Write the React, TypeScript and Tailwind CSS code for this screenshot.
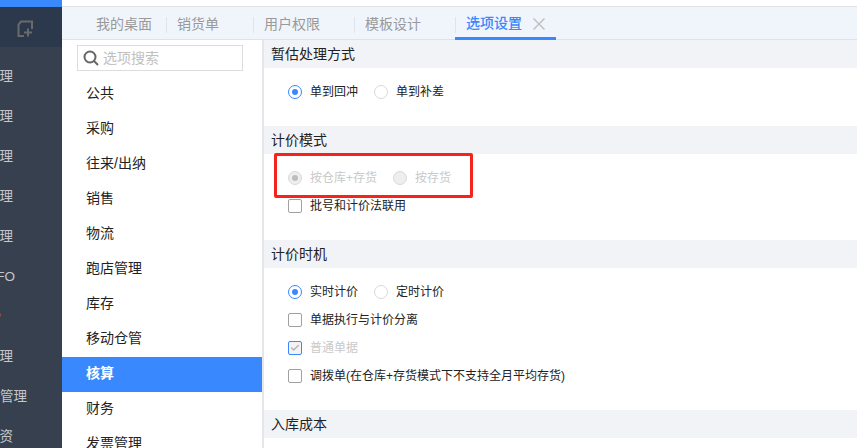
import { X, Check } from "lucide-react";

const font = { fontFamily: '"Liberation Sans", "Noto Sans CJK SC", sans-serif' };

const sideItems = [
  { label: "管理", cls: "mr-[49px]" },
  { label: "管理", cls: "mr-[49px]" },
  { label: "管理", cls: "mr-[49px]" },
  { label: "管理", cls: "mr-[49px]" },
  { label: "管理", cls: "mr-[49px]" },
  { label: "FIFO", cls: "mr-[47px]" },
  { label: "P", cls: "mr-[61px] text-[#c8623a]" },
  { label: "管理", cls: "mr-[49px]" },
  { label: "库存管理", cls: "mr-[35px]" },
  { label: "工资", cls: "mr-[49px]" },
];

const menu = ["公共", "采购", "往来/出纳", "销售", "物流", "跑店管理", "库存", "移动仓管", "核算", "财务", "发票管理"];
const tabs = ["我的桌面", "销货单", "用户权限", "模板设计"];

function Radio({ label, checked, disabled }: { label: string; checked?: boolean; disabled?: boolean }) {
  if (disabled) {
    return (
      <label className="flex items-center gap-[8px] text-[#c9c9c9]">
        <span className="flex h-[14px] w-[14px] items-center justify-center rounded-full border border-[#d9d9d9] bg-[#eeeeee]">
          {checked && <span className="h-[6px] w-[6px] rounded-full bg-[#bdbdbd]" />}
        </span>
        {label}
      </label>
    );
  }
  return (
    <label className="flex items-center gap-[8px] text-[#222]">
      <span className={`flex h-[14px] w-[14px] items-center justify-center rounded-full border bg-white ${checked ? "border-[#3a88fd]" : "border-[#d9d9d9]"}`}>
        {checked && <span className="h-[6px] w-[6px] rounded-full bg-[#3a88fd]" />}
      </span>
      {label}
    </label>
  );
}

function CheckRow({ label, checked }: { label: string; checked?: boolean }) {
  return (
    <label className={`flex h-7 items-center gap-[8px] ${checked ? "text-[#c9c9c9]" : "text-[#222]"}`}>
      <span className={`flex h-[14px] w-[14px] items-center justify-center rounded-[2px] border ${checked ? "border-[#3a88fd] bg-[#f3f3f3]" : "border-[#a0a0a0] bg-white"}`}>
        {checked && <Check className="h-[10px] w-[10px] text-[#b5b5b5]" strokeWidth={3.5} />}
      </span>
      {label}
    </label>
  );
}

function SectionHead({ title }: { title: string }) {
  return <div className="flex h-7 items-center bg-[#f2f3f7] pl-[7px] text-[14px] text-[#222]">{title}</div>;
}

export default function App() {
  return (
    <div className="relative flex h-[448px] w-[857px] overflow-hidden bg-white" style={font}>
      {/* left dark nav, cut off by the crop */}
      <div className="flex w-[62px] shrink-0 flex-col overflow-hidden bg-[#36404f]">
        <div className="h-[7px] shrink-0 bg-[#3a88fd]" />
        <div className="flex h-[40px] shrink-0 items-center bg-[#2c384c] pl-4 pt-[4px]">
          <svg width="18" height="18" viewBox="0 0 18 18" fill="none" stroke="#6a6a6a" strokeWidth="2">
            <path d="M8 16H2.5V4.5L5 1.5H16V9" />
            <path d="M12 8.5V16.5M8 12.5H16" />
          </svg>
        </div>
        <div className="flex shrink-0 flex-col pt-[10px]">
          {sideItems.map((item, i) => (
            <div key={i} className="flex h-10 items-center justify-end overflow-hidden whitespace-nowrap text-[13.5px] text-[#c4c7cc]">
              <span className={item.cls}>{item.label}</span>
            </div>
          ))}
        </div>
      </div>

      <div className="flex min-w-0 flex-1 flex-col">
        <div className="h-[6px] bg-white" />
        {/* tab bar */}
        <div className="flex h-[34px] shrink-0 items-stretch border-y border-y-[#e0e2e6] bg-[#f0f5fc] pl-[34px] text-[14px] text-[#999999]">
          {tabs.map((t, i) => (
            <div key={t} className="flex items-center pt-[3px]">
              <span className={i === 0 ? "pr-[14px]" : "pl-[10px] pr-[34px]"}>{t}</span>
              <span className="h-[16px] w-px bg-[#e0e4ea]" />
            </div>
          ))}
          <div className="-mb-px -ml-px flex items-center gap-[7px] border-b-[3px] border-b-[#3a88fd] pl-[11px] pr-[7px] pt-[3px] font-medium text-[#3a88fd]">
            <span>选项设置</span>
            <X className="h-[20px] w-[20px] text-[#c2c2c2]" strokeWidth={2} />
          </div>
        </div>

        <div className="flex min-h-0 flex-1">
          {/* option category list */}
          <div className="w-[200px] shrink-0 bg-white">
            <div className="pl-[15px] pt-[5px]">
              <div className="flex h-[26px] w-[166px] items-center gap-[4px] border border-[#dddddd] pl-[5px] text-[14px] text-[#c0c0c0]">
                <svg width="16" height="16" viewBox="0 0 16 16" fill="none" stroke="#666666" strokeWidth="2">
                  <circle cx="7" cy="7" r="5.5" />
                  <path d="M11 11L15 15" />
                </svg>
                选项搜索
              </div>
            </div>
            <div className="mt-[6px]">
              {menu.map((m) => (
                <div key={m} className={`flex h-[35px] items-center pb-[2px] pl-6 text-[14px] ${m === "核算" ? "bg-[#3a88fd] font-bold text-white" : "text-[#222]"}`}>
                  {m}
                </div>
              ))}
            </div>
          </div>

          {/* settings */}
          <div className="min-w-0 flex-1 border-l-2 border-l-[#e4e6ea] text-[12px]">
            <SectionHead title="暂估处理方式" />
            <div className="flex h-[58px] flex-col pl-6 pt-[10px]">
              <div className="flex h-7 items-center gap-[16px]">
                <Radio label="单到回冲" checked />
                <Radio label="单到补差" />
              </div>
            </div>
            <SectionHead title="计价模式" />
            <div className="flex h-[86px] flex-col pl-6 pt-[10px]">
              <div className="flex h-7 items-center gap-[16px]">
                <Radio label="按仓库+存货" checked disabled />
                <Radio label="按存货" disabled />
              </div>
              <CheckRow label="批号和计价法联用" />
            </div>
            <SectionHead title="计价时机" />
            <div className="flex h-[142px] flex-col pl-6 pt-[10px]">
              <div className="flex h-7 items-center gap-[16px]">
                <Radio label="实时计价" checked />
                <Radio label="定时计价" />
              </div>
              <CheckRow label="单据执行与计价分离" />
              <CheckRow label="普通单据" checked />
              <CheckRow label="调拨单(在仓库+存货模式下不支持全月平均存货)" />
            </div>
            <SectionHead title="入库成本" />
          </div>
        </div>
      </div>

      {/* red annotation over the screenshot */}
      <div className="absolute left-[274px] top-[153px] h-[45px] w-[199px] rounded-[2px] border-[3px] border-[#f5231c]" />
    </div>
  );
}
